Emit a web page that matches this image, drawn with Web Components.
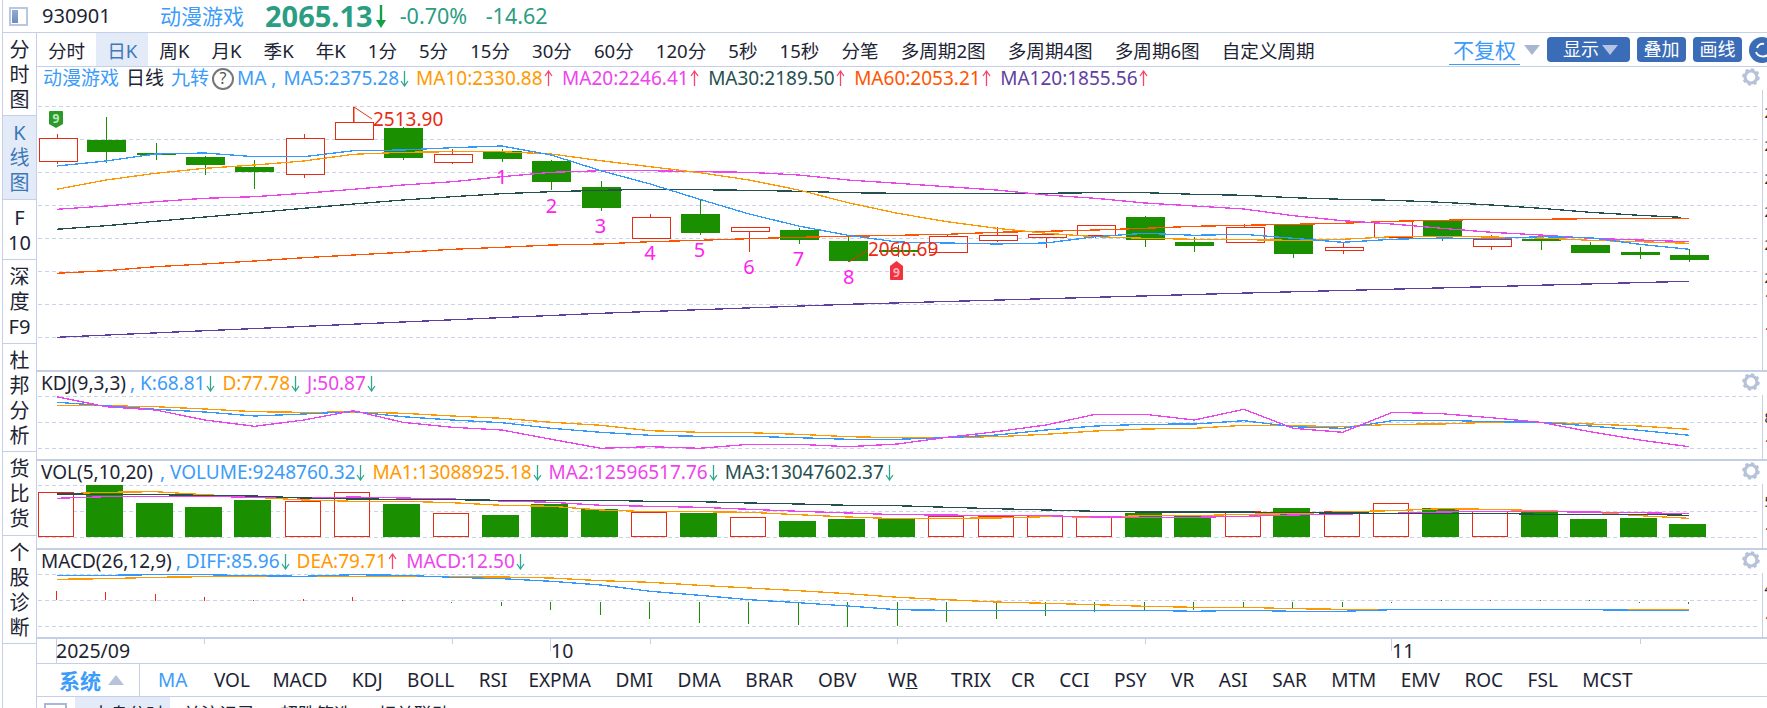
<!DOCTYPE html>
<html>
<head>
<meta charset="utf-8">
<title>K线</title>
<style>
  html, body { margin: 0; height: 100%; background: #fff; overflow: hidden; }
  body { font-family: "Noto Sans", "Noto Sans CJK SC", sans-serif; color: #1d2433; }
</style>
</head>
<body>
<chart-app>
  <quote-bar slot="top" code="930901" name="动漫游戏" price="2065.13" pct="-0.70%" chg="-14.62"></quote-bar>
  <side-rail slot="side">
    <side-tab>分<br>时<br>图</side-tab>
    <side-tab active>K<br>线<br>图</side-tab>
    <side-tab>F<br>10</side-tab>
    <side-tab>深<br>度<br>F9</side-tab>
    <side-tab>杜<br>邦<br>分<br>析</side-tab>
    <side-tab>货<br>比<br>货</side-tab>
    <side-tab>个<br>股<br>诊<br>断</side-tab>
  </side-rail>
  <period-bar>
    <period-tab>分时</period-tab><period-tab active>日K</period-tab><period-tab>周K</period-tab><period-tab>月K</period-tab><period-tab>季K</period-tab><period-tab>年K</period-tab><period-tab>1分</period-tab><period-tab>5分</period-tab><period-tab>15分</period-tab><period-tab>30分</period-tab><period-tab>60分</period-tab><period-tab>120分</period-tab><period-tab>5秒</period-tab><period-tab>15秒</period-tab><period-tab>分笔</period-tab><period-tab>多周期2图</period-tab><period-tab>多周期4图</period-tab><period-tab>多周期6图</period-tab><period-tab>自定义周期</period-tab>
  </period-bar>
  <chart-pane kind="main" top="67" height="303" legend="23" inset="6">
    <leg-item color="#3c9cf7">动漫游戏</leg-item>
    <leg-item color="#1d2433">日线</leg-item>
    <leg-item color="#3c9cf7">九转</leg-item>
    <help-mark></help-mark>
    <leg-item color="#3c9cf7">MA ,</leg-item>
    <leg-item color="#3c9cf7" arrow="down">MA5:2375.28</leg-item>
    <leg-item color="#ff9900" arrow="up">MA10:2330.88</leg-item>
    <leg-item color="#ee44ee" arrow="up">MA20:2246.41</leg-item>
    <leg-item color="#265050" arrow="up">MA30:2189.50</leg-item>
    <leg-item color="#ff5500" arrow="up">MA60:2053.21</leg-item>
    <leg-item color="#6040a0" arrow="up">MA120:1855.56</leg-item>
  </chart-pane>
  <chart-pane kind="kdj" top="372" height="87" legend="23" inset="4">
    <leg-item color="#1d2433" style="margin-right:-3px">KDJ(9,3,3)</leg-item>
    <leg-item color="#3c9cf7" arrow="down">, K:68.81</leg-item>
    <leg-item color="#ff9900" arrow="down">D:77.78</leg-item>
    <leg-item color="#ee44ee" arrow="down">J:50.87</leg-item>
  </chart-pane>
  <chart-pane kind="vol" top="461" height="87" legend="23" inset="4">
    <leg-item color="#1d2433">VOL(5,10,20)</leg-item>
    <leg-item color="#3c9cf7" arrow="down">, VOLUME:9248760.32</leg-item>
    <leg-item color="#ff9900" arrow="down">MA1:13088925.18</leg-item>
    <leg-item color="#ee44ee" arrow="down">MA2:12596517.76</leg-item>
    <leg-item color="#265050" arrow="down">MA3:13047602.37</leg-item>
  </chart-pane>
  <chart-pane kind="macd" top="550" height="87" legend="23" inset="4">
    <leg-item color="#1d2433" style="margin-right:-3px">MACD(26,12,9)</leg-item>
    <leg-item color="#3c9cf7" arrow="down">, DIFF:85.96</leg-item>
    <leg-item color="#ff9900" arrow="up">DEA:79.71</leg-item>
    <leg-item color="#ee44ee" arrow="down">MACD:12.50</leg-item>
  </chart-pane>
  <date-axis></date-axis>
  <indicator-bar>
    <ind-tab active>MA</ind-tab><ind-tab style="margin-left:2px">VOL</ind-tab><ind-tab style="margin-left:-2px">MACD</ind-tab><ind-tab>KDJ</ind-tab><ind-tab>BOLL</ind-tab><ind-tab>RSI</ind-tab><ind-tab style="margin-left:-3.5px">EXPMA</ind-tab><ind-tab>DMI</ind-tab><ind-tab>DMA</ind-tab><ind-tab>BRAR</ind-tab><ind-tab>OBV</ind-tab><ind-tab style="margin-left:7px">W<u>R</u></ind-tab><ind-tab style="margin-left:9px">TRIX</ind-tab><ind-tab style="margin-left:-4.5px">CR</ind-tab><ind-tab>CCI</ind-tab><ind-tab>PSY</ind-tab><ind-tab>VR</ind-tab><ind-tab>ASI</ind-tab><ind-tab>SAR</ind-tab><ind-tab>MTM</ind-tab><ind-tab>EMV</ind-tab><ind-tab>ROC</ind-tab><ind-tab>FSL</ind-tab><ind-tab>MCST</ind-tab>
  </indicator-bar>
  <tool-strip></tool-strip>
</chart-app>

<script>
const LINE = '#c5d0e8';

// chart data, all y values are page pixels
const cx = i => 56.6 + i * 49.47;

// [up, bodyTop, bodyBottom, wickTop, wickBottom]
const candles = [
  [1,138,161,134,164],[0,140,152,117,163],[0,153,155,143,160],[0,157,165,156,175],[0,167,172,160,189],
  [1,138,174,134,178],[1,122,139,107,139],[0,128,158,127,160],[1,154,162,149,164],[0,151,159,149,162],
  [0,161,182,160,190],[0,187,208,181,211],[1,217,238,214,238],[0,214,233,199,235],[1,227,231,227,252],
  [0,230,240,228,244],[0,241,261,237,262],[0,250,252,245,257],[1,236,252,234,252],[1,235,240,227,242],
  [1,234,237,233,248],[1,225,235,225,238],[0,217,240,216,247],[0,242,246,237,252],[1,227,242,224,243],
  [0,225,254,225,258],[1,247,250,243,254],[1,221,237,221,237],[0,221,236,221,241],[1,239,246,235,250],
  [0,239,241,238,250],[0,245,253,242,253],[0,252,255,247,259],[0,255,260,249,262]
];

const ma5 = [166,161,154,153,156.7,156.7,150.7,150,147.7,146,155,170.7,184,199.3,214,226,235.3,242,243,244,243,236.7,233.3,235.3,234.3,238.3,242.3,239.3,238,238.7,236.7,237.7,244.3,249.3];
const ma10 = [189.3,180,173.3,168.3,165,161,154.3,152.3,151.7,151.7,154,160.7,166.7,172.7,180,190,202.7,213.3,221.7,228.3,233.3,236.7,238.3,239.3,239.7,240.3,239.3,236.7,236.3,237,238,240.3,241.7,243.3];
const ma20 = [209.3,206,201.7,198.3,196.7,193.3,189.3,185,181.7,176.7,172.3,170.7,170.7,171.7,172.3,175,180,183.3,186.7,190,195,198.3,203,206,209,215.7,220.7,224,228.3,232.3,235,238.3,240,241.7];
const ma30 = [229.3,225.7,221.3,217,212.7,208.3,204,200,196.7,193.7,191.7,190.3,189.3,189.7,190.3,191.3,192.7,193.3,193.3,193.3,193.3,192.7,192.7,194.3,195.3,197.7,199.3,200.3,202.3,205,208.3,212.3,215.3,217.3];
const ma60 = [273.3,270.7,266.7,264,261,257.7,255,252.3,249.3,247.3,245,244,241.7,240.3,238.7,237.3,236.3,235.3,234.3,232.3,231.3,230,228.3,226.3,225.3,224.3,223.3,221.3,220.3,219.3,219.3,218.7,218.3,218.3];
const ma120 = candles.map((c, i) => {
  const pts = [[56.6,337.3],[600,313.3],[848,304.3],[1200,294.3],[1689,281.3]];
  const x = cx(i);
  for (let k = 1; k < pts.length; k++) {
    if (x <= pts[k][0] || k === pts.length - 1) {
      const [x0, y0] = pts[k - 1], [x1, y1] = pts[k];
      return y0 + (y1 - y0) * (x - x0) / (x1 - x0);
    }
  }
});

// lower panes were read as zoomed y, so they get scaled back below
const z4 = a => a.map(v => 240 + v / 3);
const z7 = a => a.map(v => 468 + v / 3);

const kdjK = z4([487,497,508,516,528,522,515,530,540,548,565,577,586,589,589,593,598,598,593,585,570,558,553,552,542,560,565,542,541,545,547,558,571,586]);
const kdjD = z4([496,497,500,507,515,517,516,520,528,535,547,556,572,577,578,583,590,593,592,590,583,573,567,565,556,557,560,553,552,547,547,552,558,568]);
const kdjJ = z4([470,500,510,540,559,540,512,547,562,570,598,625,620,625,613,613,620,612,592,575,555,523,523,540,508,565,577,517,521,533,547,575,600,620]);

const volTops = [73,50,105,117,96,100,73,108,136,141,108,123,133,135,148,159,153,153,145,145,145,146,135,143,130,120,130,106,120,130,133,153,150,168];
const volUp = [1,0,0,0,0,1,1,0,1,0,0,0,1,0,1,0,0,0,1,1,1,1,0,0,1,0,1,1,0,1,0,0,0,0];
const vol1 = z7([78,73,71,80,88,96,100,100,104,112,115,126,131,131,133,140,147,152,151,150,146,147,143,143,139,137,131,128,122,124,128,132,143,151]);
const vol2 = z7([91,86,86,86,87,90,87,90,93,99,103,112,115,118,124,130,135,140,141,143,143,147,148,148,145,141,138,136,132,130,131,132,134,137]);
const vol3 = z7([78,79,80,82,84,90,93,94,95,97,97,97,100,101,105,108,112,113,118,122,126,130,132,132,132,134,135,136,136,136,139,139,139,142]);

// [top, bottom] of each MACD stick, zoomed y
const macdBars = [[370,398],[373,398],[378,398],[387,398],[395,398],[393,398],[387,398],[395,398],[402,403],[402,414],[402,425],[402,440],[402,452],[402,464],[402,467],[402,470],[402,476],[402,473],[402,461],[402,452],[402,443],[402,431],[402,428],[402,425],[402,417],[402,420],[402,416],[402,405],[396,399],[396,399],[396,398],[396,399],[402,405],[402,408]];
const macdUp = [1,1,1,1,1,1,1,1,0,0,0,0,0,0,0,0,0,0,0,0,0,0,0,0,0,0,0,0,0,1,1,0,0,0];
const diff = z7([322,322,320,320,323,325,320,322,328,332,340,351,370,382,395,404,414,425,427,427,427,427,427,430,427,430,430,425,425,425,425,425,427,427]);
const dea = z7([334,332,328,326,326,326,325,325,326,327,330,338,343,352,360,368,377,388,395,402,406,410,415,418,418,422,424,425,425,425,425,425,425,425]);

const C = { blue: '#3399ff', orange: '#ff9900', mag: '#ee44ee', dark: '#265050', red: '#ff5500', purple: '#5f3f9f' };
const UP = '#e82c14', DOWN = '#1a9000';

const poly = (ys, color, end) => {
  const pts = ys.map((y, i) => `${(i === ys.length - 1 && end ? end : cx(i)).toFixed(1)},${y.toFixed(1)}`).join(' ');
  return `<polyline points="${pts}" fill="none" stroke="${color}" stroke-width="1.3" shape-rendering="crispEdges"/>`;
};

const grid = ys => ys.map(y => `<line x1="38" x2="1760" y1="${y}.5" y2="${y}.5" stroke="#c8d2e8" stroke-dasharray="4 3"/>`).join('');

// the price scale is cut by the window, only the first digit edge shows
const axisTicks = list => list.map(([y, t]) => `<text x="1764.5" y="${y}" font-size="14" fill="#33271a">${t}</text>`).join('');

const renderers = {
  main() {
    let s = grid([106,139,172,205,238,271,304,337]);
    candles.forEach(([up, t, b, wt, wb], i) => {
      const x = Math.round(cx(i));
      const col = up ? UP : DOWN;
      s += `<line x1="${x}.5" x2="${x}.5" y1="${wt}" y2="${wb}" stroke="${col}"/>`;
      if (up) s += `<rect x="${x - 18}.5" y="${t}.5" width="38" height="${b - t}" fill="#fff" stroke="${col}" stroke-width="1.4" shape-rendering="crispEdges"/>`;
      else s += `<rect x="${x - 19}" y="${t}" width="39" height="${b - t}" fill="${col}"/>`;
    });
    s += poly(ma120, C.purple) + poly(ma60, C.red) + poly(ma30, C.dark, 1681) + poly(ma20, C.mag) + poly(ma10, C.orange) + poly(ma5, C.blue);
    // high and low notes
    s += `<path d="M354 122V107L372 119" fill="none" stroke="${UP}"/><text x="373" y="126" font-size="19" fill="${UP}">2513.90</text>`;
    s += `<path d="M849 262L868 250" fill="none" stroke="${UP}"/><text x="868" y="256" font-size="19" fill="${UP}">2060.69</text>`;
    // nine-turn flags
    s += `<path d="M49 112q0-1 1-1h12q1 0 1 1v12l-7 4l-7-4z" fill="#2b9a2b"/><text x="56" y="123" font-size="12" font-weight="700" text-anchor="middle" fill="#bfe8bf">9</text>`;
    s += `<path d="M896.500 261l6.500 5v13q0 1-1 1h-11q-1 0-1-1v-13z" fill="#f2323f"/><text x="896.500" y="277" font-size="12" font-weight="700" text-anchor="middle" fill="#ffb3b8">9</text>`;
    [[1,501.7,184],[2,551.5,213],[3,600.4,233],[4,650,260],[5,699.5,257],[6,749,274],[7,798.500,266],[8,848.7,284]].forEach(([n, x, y]) => {
      s += `<text x="${x}" y="${y}" font-size="20" text-anchor="middle" fill="#ff22ee">${n}</text>`;
    });
    s += axisTicks([[118,'2'],[151,'2'],[184,'2'],[217,'2'],[250,'2'],[283,'2'],[304,'1'],[337,'1']]);
    return s;
  },
  kdj() {
    return grid([396,422,448]) + poly(kdjD, C.orange) + poly(kdjK, C.blue) + poly(kdjJ, C.mag) +
      axisTicks([[423,'8'],[449,'1']]);
  },
  vol() {
    let s = grid([485,511,537]);
    volTops.forEach((t, i) => {
      const x = Math.round(cx(i)) - 2;
      const top = Math.round(468 + t / 3);
      if (volUp[i]) s += `<rect x="${x - 17}.5" y="${top}.5" width="35" height="${536 - top}" fill="#fff" stroke="${UP}" stroke-width="1.4" shape-rendering="crispEdges"/>`;
      else s += `<rect x="${x - 18}" y="${top}" width="37" height="${537 - top}" fill="${DOWN}"/>`;
    });
    s += poly(vol1, C.orange) + poly(vol2, C.mag) + poly(vol3, C.dark);
    return s + axisTicks([[507,'5'],[537,'1']]);
  },
  macd() {
    let s = grid([574,600,626]);
    macdBars.forEach(([t, b], i) => {
      const x = Math.round(cx(i)) - 1;
      s += `<rect x="${x}" y="${Math.round(468 + t / 3)}" width="1" height="${Math.max(1, Math.round((b - t) / 3))}" fill="${macdUp[i] ? UP : DOWN}"/>`;
    });
    return s + poly(dea, C.orange) + poly(diff, C.blue) + axisTicks([[594,'4'],[626,'1']]);
  }
};

class ChartApp extends HTMLElement {
  constructor() {
    super();
    this.attachShadow({mode: 'open'}).innerHTML = `
    <style>
      :host {
        display: grid;
        grid-template-columns: 34px 1fr;
        grid-template-rows: 33px 1fr;
        grid-template-areas: 'top top' 'side main';
        width: 1765px;
        height: 708px;
        margin-left: 2px;
        border-left: 1px solid ${LINE};
        overflow: hidden;
      }
      ::slotted([slot=top]) { grid-area: top; }
      ::slotted([slot=side]) { grid-area: side; }
      .main { grid-area: main; display: flex; flex-direction: column; min-width: 0; }
    </style>
    <slot name="top"></slot>
    <slot name="side"></slot>
    <div class="main"><slot></slot></div>`;
  }
}

class QuoteBar extends HTMLElement {
  connectedCallback() {
    const a = n => this.getAttribute(n);
    this.attachShadow({mode: 'open'}).innerHTML = `
    <style>
      :host {
        display: flex;
        align-items: center;
        height: 32px;
        line-height: 30px;
        border-bottom: 1px solid ${LINE};
        font-size: 20px;
        padding-left: 6px;
      }
      .box { width: 15px; height: 15px; border: 2px solid #b9c7e3; display: flex; padding: 0; box-sizing: content-box; }
      .box i { width: 6px; margin: 1px 0 1px 1px; background: linear-gradient(#92a9d2, #6f8cc0); }
      .code { margin-left: 14px; width: 118px; }
      .name { color: #3c9cf7; font-size: 21px; width: 105px; }
      .price { color: #2a9d82; font-size: 29px; font-weight: 700; }
      .pct { color: #2a9d82; margin-left: 14px; width: 86px; font-size: 21.5px; }
      .chg { color: #2a9d82; font-size: 21.5px; }
      svg { margin-left: 3px; }
    </style>
    <div class="box"><i></i></div>
    <span class="code">${a('code')}</span>
    <span class="name">${a('name')}</span>
    <span class="price">${a('price')}</span>
    <svg width="10" height="24" viewBox="0 0 10 24"><path d="M3.800 1h2.400v15H10L5 24L0 16h3.800z" fill="#16a045"/></svg>
    <span class="pct">${a('pct')}</span>
    <span class="chg">${a('chg')}</span>`;
  }
}

class SideRail extends HTMLElement {
  constructor() {
    super();
    this.attachShadow({mode: 'open'}).innerHTML = `
    <style>
      :host {
        display: grid;
        grid-template-rows: 83px 84px 60px 84px 108px 84px 108px 1fr;
        border-right: 1px solid ${LINE};
      }
    </style>
    <slot></slot>`;
  }
}

class SideTab extends HTMLElement {
  constructor() {
    super();
    this.attachShadow({mode: 'open'}).innerHTML = `
    <style>
      :host {
        display: flex;
        align-items: center;
        justify-content: center;
        text-align: center;
        font-size: 20px;
        line-height: 25px;
        border-bottom: 1px solid ${LINE};
        box-sizing: border-box;
        color: #1d2433;
      }
      :host([active]) { background: #e4ebf8; color: #3a78b8; }
    </style>
    <div><slot></slot></div>`;
  }
}

class PeriodBar extends HTMLElement {
  constructor() {
    super();
    this.attachShadow({mode: 'open'}).innerHTML = `
    <style>
      :host {
        display: flex;
        align-items: stretch;
        height: 33px;
        flex: none;
        border-bottom: 1px solid ${LINE};
        overflow: hidden;
      }
      .tools { margin-left: auto; margin-right: -7px; display: flex; align-items: center; gap: 7px; }
      .fq { color: #3c9cf7; font-size: 21px; border-bottom: 1px solid #3c9cf7; padding: 0 4px; line-height: 27px; height: 27px; margin-top: 2px; }
      .tri { width: 0; height: 0; border: 8px solid transparent; border-top: 10px solid #a9b6d2; border-bottom: 0; margin: 0 0 0 -3px; }
      .btn { background: #3a6cb7; color: #fff; border-radius: 4px; height: 25px; line-height: 25px; font-size: 18px; padding: 0 6.5px; display: flex; align-items: center; gap: 3px; }
      .btn .tri { margin: 0; border-top-color: #b4c4e2; }
      .show { padding: 0 12px 0 16px; }
      .round { width: 26px; height: 26px; flex: none; }
    </style>
    <slot></slot>
    <div class="tools">
      <span class="fq">不复权</span><span class="tri"></span>
      <span class="btn show">显示<span class="tri"></span></span>
      <span class="btn">叠加</span>
      <span class="btn">画线</span>
      <svg class="round" viewBox="0 0 26 26"><circle cx="13" cy="13" r="13" fill="#3a6cb7"/><path d="M7 15c2 5 9 6 13 2M20 17l-1-5M8 11c1-3 4-5 7-4" fill="none" stroke="#fff" stroke-width="2"/></svg>
    </div>`;
  }
}

class PeriodTab extends HTMLElement {
  constructor() {
    super();
    this.attachShadow({mode: 'open'}).innerHTML = `
    <style>
      :host { display: flex; align-items: center; padding: 0 11px; font-size: 18.6px; color: #1d2433; white-space: nowrap; }
      :host([active]) { background: #e4ebf8; color: #3f79bc; }
    </style>
    <slot></slot>`;
  }
}

class ChartPane extends HTMLElement {
  connectedCallback() {
    const top = +this.getAttribute('top');
    const h = +this.getAttribute('height');
    const lg = +this.getAttribute('legend');
    const kind = this.getAttribute('kind');
    this.attachShadow({mode: 'open'}).innerHTML = `
    <style>
      :host {
        display: flex;
        flex-direction: column;
        flex: none;
        position: relative;
        height: ${h}px;
        border-bottom: 2px solid #c3cfe5;
      }
      .legend { display: flex; align-items: center; gap: 7px; height: ${lg}px; padding-left: ${this.getAttribute('inset')}px; flex: none; white-space: nowrap; line-height: ${lg}px; }
      svg.plot { flex: 1; min-height: 0; display: block; font-family: "Noto Sans", "Noto Sans CJK SC", sans-serif; }
      .gear { position: absolute; left: 1705px; top: 1px; }
    </style>
    <div class="legend"><slot></slot></div>
    <svg class="plot" width="1730" height="${h - lg}" viewBox="37 ${top + lg} 1730 ${h - lg}">
      <line x1="1762.5" x2="1762.5" y1="${top}" y2="${top + h}" stroke="${LINE}"/>
      ${renderers[kind]()}
    </svg>
    <svg class="gear" width="18" height="18" viewBox="0 0 18 18">
      <circle cx="9" cy="9" r="6" fill="none" stroke="#b6c2d8" stroke-width="3.200"/>
      <circle cx="9" cy="9" r="7.800" fill="none" stroke="#b6c2d8" stroke-width="2" stroke-dasharray="3.100 3"/>
    </svg>`;
  }
}

class LegItem extends HTMLElement {
  connectedCallback() {
    const arrow = this.getAttribute('arrow');
    const path = arrow === 'down' ? 'M4.500 1V15M1 11L4.500 16L8 11' : 'M4.500 16V2M1 6L4.500 1L8 6';
    const col = arrow === 'down' ? '#2ea98e' : '#f5456a';
    this.attachShadow({mode: 'open'}).innerHTML = `
    <style>
      :host { display: inline-flex; align-items: center; font-size: 19px; color: ${this.getAttribute('color')}; }
      :host([arrow=up]) { margin-right: 2.500px; }
      svg { margin-left: 1px; }
    </style>
    <slot></slot>
    ${arrow ? `<svg width="9" height="17" viewBox="0 0 9 17"><path d="${path}" fill="none" stroke="${col}" stroke-width="1.300"/></svg>` : ''}`;
  }
}

class HelpMark extends HTMLElement {
  constructor() {
    super();
    this.attachShadow({mode: 'open'}).innerHTML = `
    <style>
      :host {
        display: inline-flex;
        align-items: center;
        justify-content: center;
        width: 18px;
        height: 18px;
        margin: 0 -4px;
        border: 2px solid #777;
        border-radius: 50%;
        font-size: 16px;
        color: #555;
      }
    </style>?`;
  }
}

class DateAxis extends HTMLElement {
  constructor() {
    super();
    const ticks = [[204,5],[452,5],[650,5],[897,5],[1145,5],[1640,5],[56,24],[550,12],[1391,12]];
    this.attachShadow({mode: 'open'}).innerHTML = `
    <style>
      :host { display: block; flex: none; height: 24px; border-bottom: 1px solid ${LINE}; position: relative; font-size: 19.5px; }
      svg { position: absolute; left: 0; top: 0; }
      span { position: absolute; top: 0; line-height: 24px; }
    </style>
    <svg width="1730" height="24" viewBox="37 0 1730 24">
      ${ticks.map(([x, h]) => `<line x1="${x}.5" x2="${x}.5" y1="0" y2="${h}" stroke="${LINE}"/>`).join('')}
    </svg>
    <span style="left:19px">2025/09</span><span style="left:514px">10</span><span style="left:1355px">11</span>`;
  }
}

class IndicatorBar extends HTMLElement {
  constructor() {
    super();
    this.attachShadow({mode: 'open'}).innerHTML = `
    <style>
      :host { display: flex; align-items: center; flex: none; height: 32px; border-bottom: 1px solid ${LINE}; }
      .sys { display: flex; align-items: center; gap: 7px; height: 100%; width: 103px; box-sizing: border-box; padding-left: 22px; border-right: 1px solid ${LINE}; flex: none; }
      b { color: #3c9cf7; font-size: 21px; font-weight: 700; }
      i { width: 0; height: 0; border: 8px solid transparent; border-bottom: 10px solid #b8c3da; border-top: 0; }
      .tabs { display: flex; gap: 24.5px; padding-left: 18px; white-space: nowrap; }
    </style>
    <div class="sys"><b>系统</b><i></i></div>
    <div class="tabs"><slot></slot></div>`;
  }
}

class IndTab extends HTMLElement {
  constructor() {
    super();
    this.attachShadow({mode: 'open'}).innerHTML = `
    <style>
      :host { display: block; font-size: 19px; line-height: 30px; color: #1d2433; }
      :host([active]) { color: #3c9cf7; }
    </style>
    <slot></slot>`;
  }
}

class ToolStrip extends HTMLElement {
  constructor() {
    super();
    this.attachShadow({mode: 'open'}).innerHTML = `
    <style>
      :host { display: flex; flex: 1; min-height: 0; overflow: hidden; font-size: 18px; line-height: 24px; }
      .check { width: 19px; height: 20px; border: 2px solid #a9b8d6; margin: 6px 8px 0 7px; flex: none; }
      .on { background: #e4ebf8; width: 95px; padding: 5px 0 0 17px; box-sizing: border-box; flex: none; }
      span { padding: 5px 0 0; }
    </style>
    <div class="check"></div>
    <div class="on">大盘分时</div>
    <span style="margin-left:13px">关注记录</span>
    <span style="margin-left:25px">超跌筛选</span>
    <span style="margin-left:26px">相关联动</span>`;
  }
}

customElements.define('chart-app', ChartApp);
customElements.define('quote-bar', QuoteBar);
customElements.define('side-rail', SideRail);
customElements.define('side-tab', SideTab);
customElements.define('period-bar', PeriodBar);
customElements.define('period-tab', PeriodTab);
customElements.define('chart-pane', ChartPane);
customElements.define('leg-item', LegItem);
customElements.define('help-mark', HelpMark);
customElements.define('date-axis', DateAxis);
customElements.define('indicator-bar', IndicatorBar);
customElements.define('ind-tab', IndTab);
customElements.define('tool-strip', ToolStrip);
</script>
</body>
</html>
